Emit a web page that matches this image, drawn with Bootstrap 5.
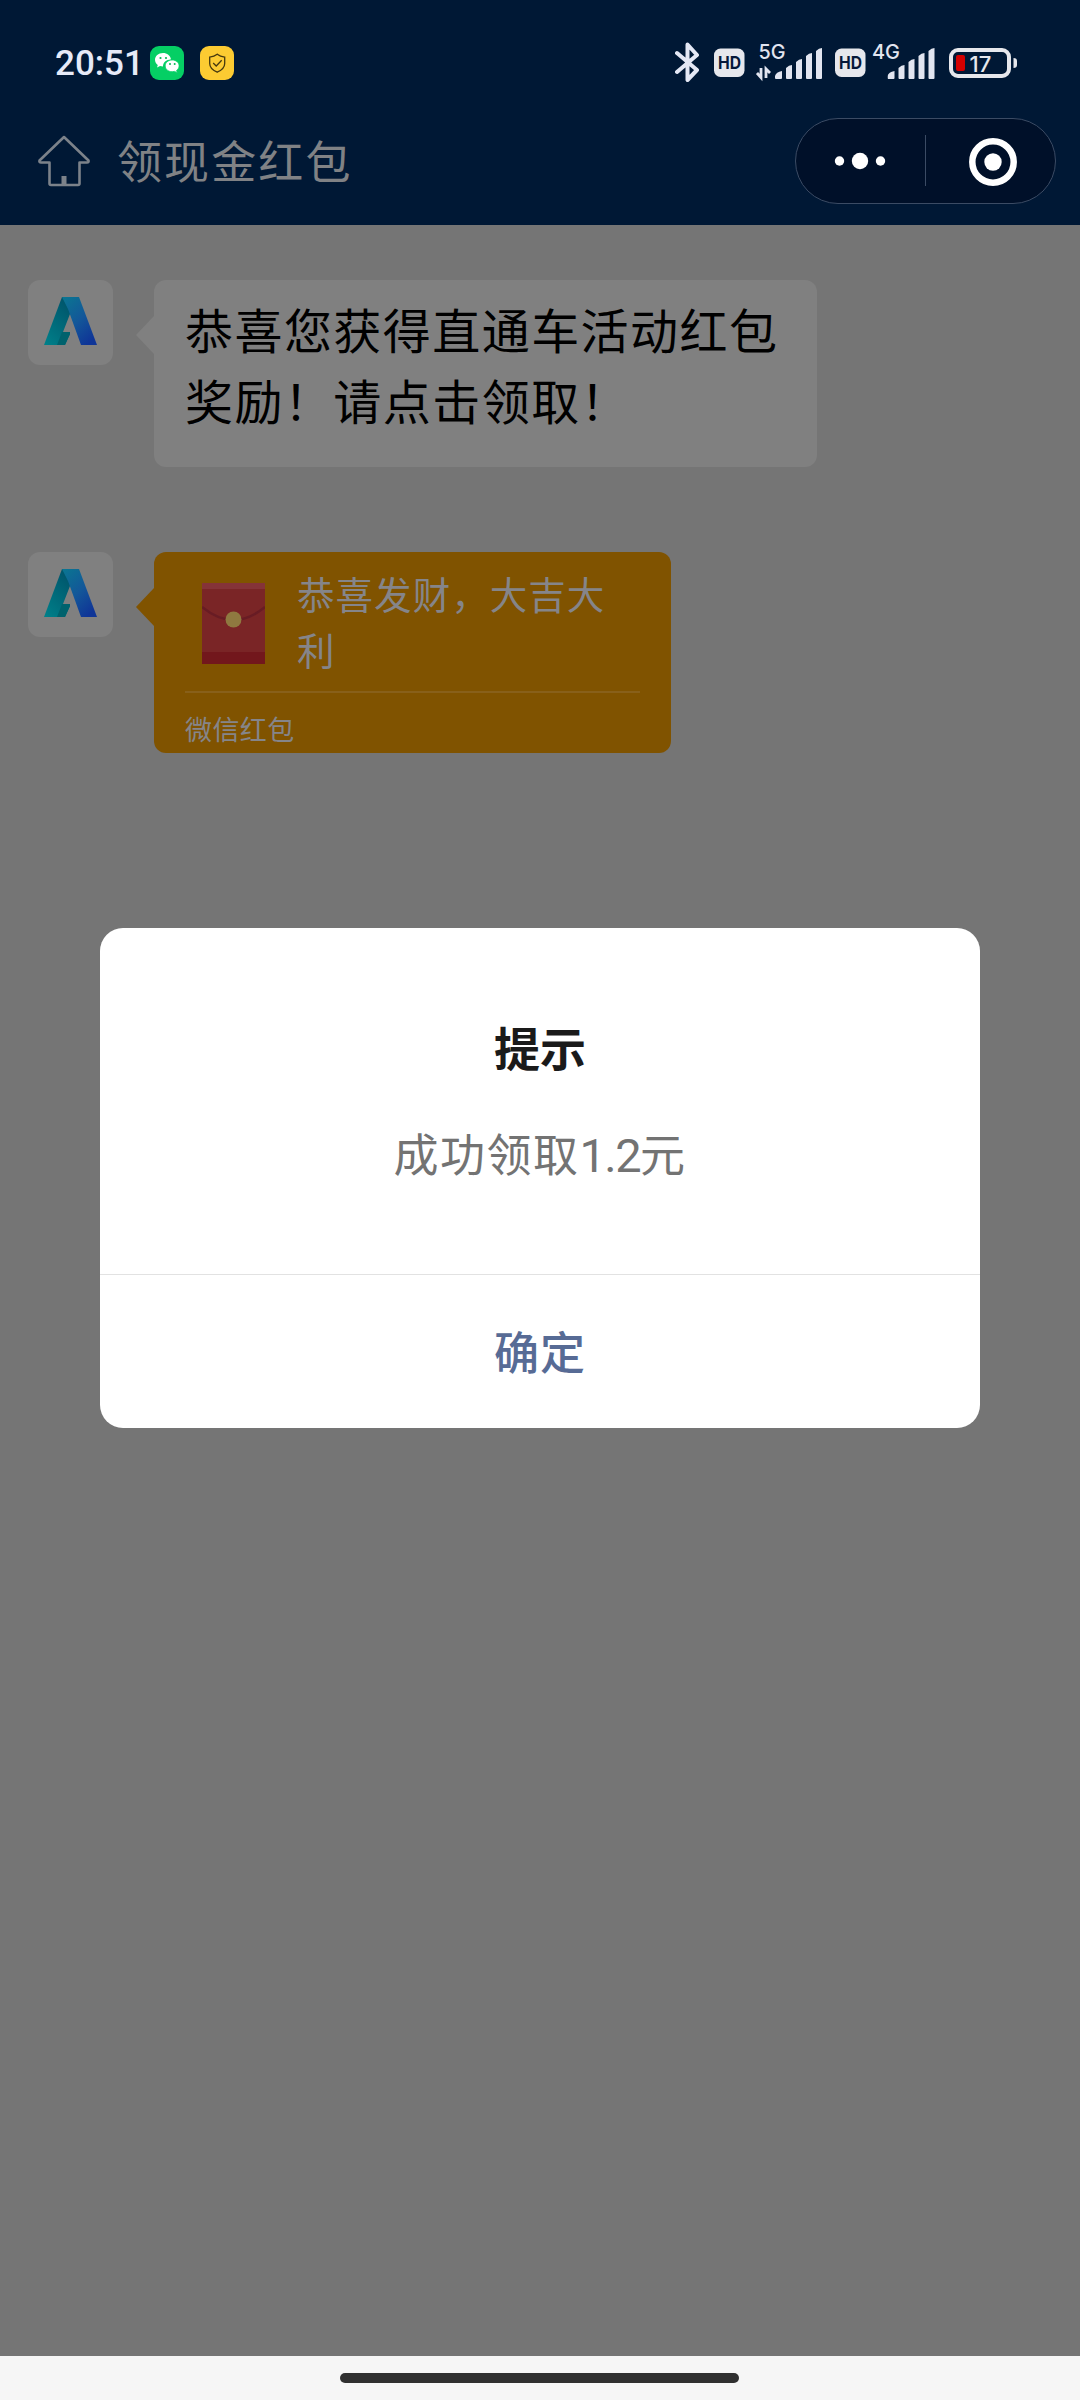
<!DOCTYPE html>
<html lang="zh-CN">
<head>
<meta charset="utf-8">
<title>领现金红包</title>
<link rel="stylesheet" href="https://cdn.jsdelivr.net/npm/bootstrap@5.3.0/dist/css/bootstrap.min.css">
<style>
  body { margin: 0; font-family: "Noto Sans CJK SC", sans-serif; background: #757575; }
  .phone { width: 1080px; height: 2400px; overflow: hidden; }
  .app-head { height: 225px; background: #001835; }
  .status-line { height: 44px; margin-top: 40px; padding: 0 62px 0 55px; }
  .clock { font: 500 35px/48px "Roboto", sans-serif; color: #e6eaf8; letter-spacing: 0; width: 95px; white-space: nowrap; }
  .app-ico { width: 34px; height: 34px; margin-top: 6px; }
  .nav-line { height: 86px; margin-top: 34px; padding: 0 24px 0 37px; }
  .page-name { color: #808285; font-size: 45px; line-height: 60px; letter-spacing: 2.1px; margin: -2px 0 0 26px; }
  .capsule { width: 261px; height: 86px; border: 1px solid #3b4b64; border-radius: 43px; background: #001029; }
  .chat { height: 2131px; padding: 55px 28px 0; background: #757575; }
  .face { width: 85px; height: 85px; border-radius: 12px; background: #808080; }
  .bubble { position: relative; margin-left: 41px; border-radius: 12px; }
  .bubble::before { content: ""; position: absolute; left: -18px; top: 36px; border: 19px solid transparent; border-left: 0; border-right: 18px solid #808080; }
  .bubble-text { width: 663px; height: 187px; background: #808080; padding: 13px 15px 0 31px; color: #000; font-size: 48px; line-height: 71px; letter-spacing: 1.45px; white-space: nowrap; }
  .bubble-pay { width: 517px; height: 201px; background: #805300; padding: 0 31px; color: #85858a; }
  .bubble-pay::before { border-right-color: #805300; }
  .pay-main { height: 141px; border-bottom: 2px solid #88601a; padding: 17px 0 0 17px; }
  .pay-words { margin-top: -4px; font-size: 37.5px; line-height: 56px; letter-spacing: 1.05px; }
  .pay-main svg { margin-top: 14px; margin-right: 32px; }
  .pay-note { font-size: 27px; line-height: 40px; margin-top: 16px; letter-spacing: .4px; }
  .row-gap { margin-top: 85px; }
  .dialog-box { position: absolute; left: 100px; top: 928px; width: 880px; height: 500px; background: #fff; border-radius: 23px; }
  .dialog-main { height: 347px; padding-top: 84px; border-bottom: 1px solid #e2e2e2; }
  .dialog-title { font-size: 46px; line-height: 68px; font-weight: 700; color: #1a1a1a; }
  .dialog-msg { font-size: 45px; line-height: 68px; color: #737373; margin-top: 39px; letter-spacing: 1.5px; }
  .dialog-msg span { font-family: "Roboto", sans-serif; font-size: 47px; letter-spacing: -1.6px; }
  .dialog-ok { height: 153px; font-size: 45px; font-weight: 500; color: #576b95; letter-spacing: 1px; padding: 0 0 2px; border: 0; background: none; }
  .home-zone { height: 44px; background: #f6f6f6; padding: 17px 0 0 340px; }
  .home-pill { width: 399px; height: 10px; border-radius: 5px; background: #303030; }
</style>
</head>
<body>
<svg width="0" height="0" class="position-absolute">
  <defs>
    <linearGradient id="gL" x1="0" y1="1" x2=".6" y2="0"><stop offset="0" stop-color="#00818a"/><stop offset="1" stop-color="#00566c"/></linearGradient>
    <linearGradient id="gR" x1="0" y1="0" x2=".7" y2="1"><stop offset="0" stop-color="#0a7791"/><stop offset=".55" stop-color="#135799"/><stop offset="1" stop-color="#0f3597"/></linearGradient>
    <symbol id="brandA" viewBox="0 0 85 85">
      <path d="M34 17h10l-2 17-7 18h6l1 2-5 11H16z" fill="url(#gL)"/>
      <path d="M34 52h8v2l-5 11h-8z" fill="#00626d"/>
      <path d="M34 17h17l18 48H53L40 29z" fill="url(#gR)"/>
    </symbol>
    <symbol id="hd" viewBox="0 0 31 44">
      <rect x="0" y="8.5" width="30.5" height="28.5" rx="6.5" fill="#e6e7ec"/>
      <text x="4" y="29.200" font-family="Inter, sans-serif" font-size="17" font-weight="700" fill="#06183a" textLength="23" lengthAdjust="spacingAndGlyphs">HD</text>
    </symbol>
    <symbol id="bars" viewBox="0 0 48 44">
      <path d="M0 36q1-4 7-5v7q0 1-1 1H1q-1 0-1-1zM11 28q3-3 6-3v13q0 1-1 1h-4q-1 0-1-1zM21 22q3-3 6-3v19q0 1-1 1h-4q-1 0-1-1zM31 16q3-3 6-3v25q0 1-1 1h-4q-1 0-1-1zM41 11q3-3 6-3v30q0 1-1 1h-4q-1 0-1-1z" fill="#e2e5f0"/>
    </symbol>
  </defs>
</svg>
<div class="phone position-relative">
  <header class="app-head d-flex flex-column">
    <div class="status-line d-flex flex-shrink-0">
      <div class="clock">20:51</div>
      <svg class="app-ico" viewBox="0 0 34 34">
        <rect width="34" height="34" rx="9" fill="#05cf64"/>
        <path d="M13 7c-4.700 0-8 3-8 6.800 0 2.200 1.100 4 2.800 5.200L7 21.500l3-1.500 3 .5c0-4 3-7 8-7C20.500 9.500 17 7 13 7z" fill="#fff"/>
        <path d="M22.200 14c-4 0-7 2.600-7 5.900s3 5.800 7 5.800l2.300-.3 2.800 1.300-.7-2.300c1.500-1.100 2.500-2.700 2.500-4.500 0-3.300-3-5.900-6.900-5.900z" fill="#fff" stroke="#05cf64" stroke-width=".8"/>
        <g fill="#05b957"><circle cx="10.500" cy="12" r="1.100"/><circle cx="16" cy="12" r="1.100"/><circle cx="20" cy="18" r="1"/><circle cx="24.700" cy="18" r="1"/></g>
      </svg>
      <svg class="app-ico ms-3" viewBox="0 0 34 34">
        <rect width="34" height="34" rx="9" fill="#fccb32"/>
        <path d="M17.200 8.200c2.500 2 5 2.600 7.500 2.900v6.500c0 4.500-3.700 7-7.500 8.600-3.800-1.600-7.500-4.100-7.500-8.600v-6.500c2.500-.3 5-.9 7.500-2.900zM13.200 17l3 3 5.500-5.700" fill="none" stroke="#46390f" stroke-width="1.300"/>
      </svg>
      <div class="d-flex ms-auto">
        <svg width="26" height="44" viewBox="0 0 26 44"><path d="M2 13l20 17-9.500 10V4.500L22 15 2 32" fill="none" stroke="#e4e8f5" stroke-width="4" stroke-linejoin="round" stroke-linecap="round"/></svg>
        <svg class="ms-2" width="36" height="44" viewBox="-5 0 36 44"><use href="#hd" width="31" height="44"/></svg>
        <svg class="ms-2" width="71" height="44" viewBox="-3 0 71 44">
          <text x="2.500" y="19.200" font-family="Inter, sans-serif" font-size="20" font-weight="500" fill="#e2e5f0" textLength="27" lengthAdjust="spacingAndGlyphs">5G</text>
          <path d="M5 28v9.500L1 33M10 38v-9l4 4" fill="none" stroke="#e2e5f0" stroke-width="2.800"/>
          <use href="#bars" x="19" width="48" height="44"/>
        </svg>
        <svg class="ms-2" width="34" height="44" viewBox="-3 0 34 44"><use href="#hd" width="31" height="44"/></svg>
        <svg class="ms-1" width="66" height="44" viewBox="-2 0 66 44">
          <text x="0" y="19.200" font-family="Inter, sans-serif" font-size="20" font-weight="500" fill="#e2e5f0" textLength="28" lengthAdjust="spacingAndGlyphs">4G</text>
          <use href="#bars" x="15.500" width="48" height="44"/>
        </svg>
        <svg class="ms-2" width="74" height="44" viewBox="-5 0 74 44">
          <rect x="2" y="10" width="58" height="26" rx="7" fill="none" stroke="#e6e7ec" stroke-width="4"/>
          <path d="M64.500 18q3.500 0 3.500 3v4q0 3-3.500 3z" fill="#e6e7ec"/>
          <rect x="7" y="15" width="9" height="16" rx="2" fill="#d40000"/>
          <text x="20.500" y="31.500" font-family="Inter, sans-serif" font-size="22" font-weight="500" fill="#e6e7ec">17</text>
        </svg>
      </div>
    </div>
    <div class="nav-line d-flex align-items-center flex-shrink-0">
      <svg width="54" height="54" viewBox="0 0 54 54"><path d="M27 3L2.500 26.500Q2 28.500 4 28.500h8.500v21q0 1.500 1.500 1.500h27q1.500 0 1.500-1.500v-21H50q2 0 1.500-2z" fill="none" stroke="#7c828a" stroke-width="2.600" stroke-linejoin="round"/><path d="M24.500 42h5v9h-5z" fill="#7c828a"/></svg>
      <div class="page-name">领现金红包</div>
      <div class="capsule ms-auto">
        <svg width="259" height="84" viewBox="0 0 259 84" class="d-block">
          <g fill="#fff"><circle cx="43.500" cy="42" r="4.700"/><circle cx="64" cy="42" r="8.200"/><circle cx="84.500" cy="42" r="4.700"/><circle cx="197" cy="43" r="8.700"/></g>
          <circle cx="197" cy="43" r="20.700" fill="none" stroke="#fff" stroke-width="6.500"/>
          <path d="M129.500 16v51" stroke="#3b4b64"/>
        </svg>
      </div>
    </div>
  </header>
  <main class="chat">
    <div class="d-flex align-items-start">
      <div class="face"><svg width="85" height="85"><use href="#brandA"/></svg></div>
      <div class="bubble bubble-text">恭喜您获得直通车活动红包<br>奖励！请点击领取！</div>
    </div>
    <div class="d-flex align-items-start row-gap">
      <div class="face"><svg width="85" height="85"><use href="#brandA"/></svg></div>
      <div class="bubble bubble-pay">
        <div class="pay-main d-flex align-items-start">
          <svg class="flex-shrink-0" width="63" height="81" viewBox="0 0 63 81">
            <path d="M0 0h63v81H0z" fill="#7a2526"/><path d="M0 0h63v6H0z" fill="#853338"/><path d="M0 69h63v12H0z" fill="#72171c"/>
            <path d="M0 24Q31.500 50 63 24" fill="none" stroke="#681c24" stroke-width="2.500"/><circle cx="31.500" cy="36.500" r="8" fill="#8f7940"/>
          </svg>
          <div class="pay-words text-nowrap">恭喜发财，大吉大<br>利</div>
        </div>
        <div class="pay-note">微信红包</div>
      </div>
    </div>
  </main>
  <footer class="home-zone"><div class="home-pill"></div></footer>
  <div class="dialog-box text-center" role="dialog">
    <div class="dialog-main">
      <div class="dialog-title">提示</div>
      <div class="dialog-msg">成功领取<span>1.2</span>元</div>
    </div>
    <button class="dialog-ok w-100">确定</button>
  </div>
</div>
<script src="https://cdn.jsdelivr.net/npm/bootstrap@5.3.0/dist/js/bootstrap.bundle.min.js"></script>
</body>
</html>
